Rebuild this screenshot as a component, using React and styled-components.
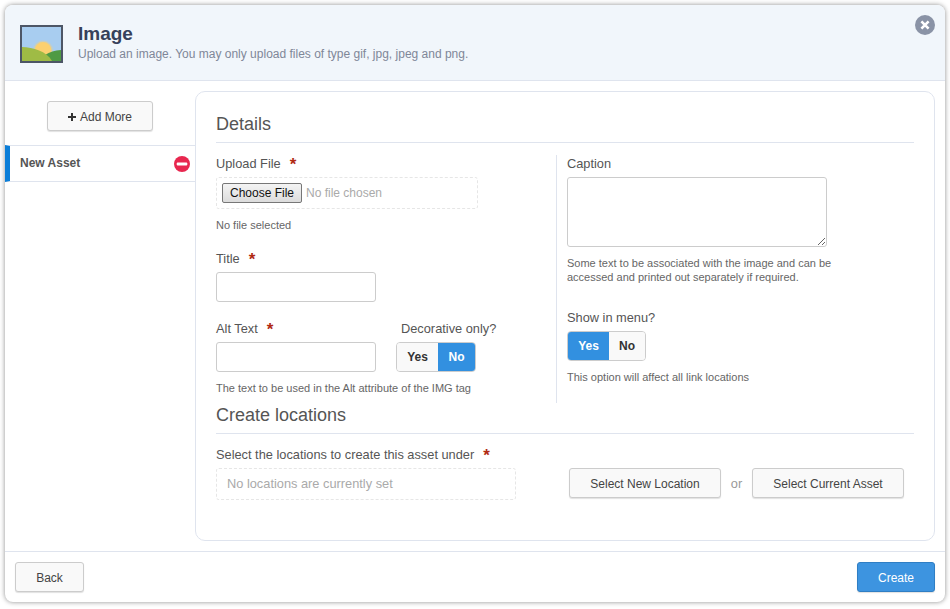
import React from "react";
import styled, { createGlobalStyle } from "styled-components";

const Global = createGlobalStyle`
  html, body { margin: 0; padding: 0; background: #fff; }
  body { font-family: "Liberation Sans", Arial, sans-serif; color: #555; }
  * { box-sizing: border-box; }
`;
const Page = styled.div`
  width: 950px; height: 609px; padding: 5px 5px 7px 5px; overflow: hidden;
`;
const Win = styled.div`
  width: 940px; height: 597px; background: #fff; border-radius: 8px;
  box-shadow: 0 0 5px rgba(0,0,0,.45); display: flex; flex-direction: column; overflow: hidden;
`;
const Header = styled.header`
  height: 76px; flex: none; background: #f1f6fb; border-bottom: 1px solid #dfe4ee;
  display: flex; align-items: flex-start; padding: 20px 0 0 15px; position: relative;
`;
const TitleWrap = styled.div`margin-left: 15px;`;
const Title = styled.h1`
  margin: -2px 0 0; font-size: 19px; line-height: 22px; font-weight: 700; color: #36415a;
`;
const Sub = styled.p`
  margin: 1px 0 0; font-size: 12px; line-height: 16px; color: #7f8798;
`;
const Close = styled.button`
  position: absolute; top: 10px; right: 10px; width: 20px; height: 20px; padding: 0;
  border: 0; border-radius: 50%; background: #8a93a6; display: flex; align-items: center; justify-content: center;
`;
const Body = styled.div`flex: 1; display: flex; min-height: 0;`;
const Side = styled.aside`width: 190px; flex: none; padding-top: 20px;`;
const SideTop = styled.div`display: flex; justify-content: center; margin-bottom: 14px;`;
const Btn = styled.button`
  height: 30px; width: ${p => p.$w}px; padding: 1px 0 0; border: 1px solid #ccc; border-radius: 3px;
  background: #f9f9f9; box-shadow: 0 1px 1px rgba(0,0,0,.12);
  font: 12px "Liberation Sans", Arial, sans-serif; color: #444; display: inline-flex;
  align-items: center; justify-content: center; gap: 4px;
`;
const AssetRow = styled.div`
  height: 37px; border-top: 1px solid #dfe4ee; border-bottom: 1px solid #dfe4ee;
  border-left: 5px solid #0b7ed8; display: flex; align-items: center;
  justify-content: space-between; padding: 0 5px 2px 10px;
  font-size: 12px; font-weight: 700; color: #555;
`;
const AssetIcon = styled.svg`margin-top: 2px; flex: none;`;
const Panel = styled.main`
  width: 740px; height: 450px; margin-top: 10px; flex: none; border: 1px solid #dfe4ee; border-radius: 10px;
  padding: 20px 20px 0 20px;
`;
const Section = styled.h2`
  margin: 0; font-size: 18px; line-height: 24px; font-weight: 400; color: #555;
  padding-bottom: 7px; border-bottom: 1px solid #dfe4ee; height: 31px;
`;
const Cols = styled.div`display: flex; margin-top: 12px; height: 248px;`;
const Left = styled.div`width: 341px; flex: none; border-right: 1px solid #dfe4ee;`;
const Right = styled.div`flex: 1; padding-left: 10px;`;
const Label = styled.div`
  font-size: 12.8px; line-height: 16px; height: 16px; padding-top: 1px; color: #555; margin-top: ${p => p.$mt || 0}px;
`;
const Star = styled.span`
  display: inline-block; color: #b02a12; font-size: 17px; font-weight: 700; margin-left: 9px; line-height: 14px; vertical-align: -2px;
`;
const FileBox = styled.div`
  width: 262px; height: 32px; margin-top: 6px; border: 1px dashed #e6e6e6; border-radius: 3px;
  display: flex; align-items: center; padding-left: 5px;
`;
const File = styled.input`
  font: 12px "Liberation Sans", Arial, sans-serif; color: #aaa; width: 250px;
  &::file-selector-button { font: 12px "Liberation Sans", Arial, sans-serif; color: #111; height: 20px; width: 80px; margin-right: 4px; padding: 0; border: 1px solid #777; border-radius: 2px; background: linear-gradient(#f4f4f4,#dcdcdc); }
`;
const Help = styled.div`
  font-size: 11px; line-height: 14px; color: #666; margin-top: ${p => p.$mt || 0}px; width: ${p => p.$w ? p.$w + "px" : "auto"};
`;
const Input = styled.input`
  display: block; width: 160px; height: 30px; margin-top: 6px; border: 1px solid #ccc; border-radius: 3px;
  background: #fff; padding: 0 8px;
`;
const Row = styled.div`display: flex; margin-top: ${p => p.$mt || 0}px;`;
const DecoCol = styled.div`margin-left: 20px;`;
const DecoLabel = styled(Label)`margin-left: 5px;`;
const Toggle = styled.div`
  display: inline-flex; height: 30px; margin-top: 6px; border: 1px solid #ccc; border-radius: 4px; overflow: hidden; background: #f9f9f9;
`;
const ToggleOn = styled.div`
  width: ${p => p.$w}px; display: flex; align-items: center; justify-content: center;
  font-size: 12px; font-weight: 700; background: ${p => p.$on ? "#3290e0" : "#f9f9f9"};
  color: ${p => p.$on ? "#fff" : "#333"};
`;
const Textarea = styled.textarea`
  display: block; width: 260px; height: 70px; margin-top: 6px; border: 1px solid #ccc; border-radius: 3px; background: #fff; padding: 4px;
`;
const LocRow = styled.div`display: flex; margin-top: 12px;`;
const LocLeft = styled.div`width: 353px; flex: none;`;
const LocBox = styled.div`
  width: 300px; height: 32px; margin-top: 6px; border: 1px dashed #e6e6e6; border-radius: 3px;
  display: flex; align-items: center; padding: 0 0 2px 10px; font-size: 12.8px; color: #aaa;
`;
const LocActions = styled.div`display: flex; align-items: center; margin-top: 22px; height: 30px;`;
const Or = styled.span`width: 31px; text-align: center; font-size: 12.8px; color: #999;`;
const Footer = styled.footer`
  height: 51px; flex: none; border-top: 1px solid #dfe4ee; padding: 10px 10px 0; display: flex; justify-content: space-between; align-items: flex-start;
`;
const Primary = styled(Btn)`
  background: #3d94e0; border-color: #2f7ec4; color: #fff;
`;

const Landscape = () => (
  <svg width="43" height="38" viewBox="0 0 43 38" style={{ flex: "none" }}>
    <defs>
      <clipPath id="c"><rect x="2" y="2" width="39" height="34" /></clipPath>
    </defs>
    <rect width="43" height="38" fill="#4d5666" />
    <g clipPath="url(#c)">
      <rect x="2" y="2" width="39" height="34" fill="#a8cdf0" />
      <circle cx="23" cy="25.5" r="10" fill="#fcd06f" opacity=".35" />
      <circle cx="23" cy="25.5" r="8.5" fill="#fcd06f" />
      <path d="M25 30 C 30 26.5 36 25 43 25 L43 38 L25 38 Z" fill="#4f9a44" />
      <path d="M0 22 C 12 22 28 26 33 38 L0 38 Z" fill="#9fbb45" />
    </g>
  </svg>
);

export default function App() {
  return (
    <Page>
      <Global />
      <Win>
        <Header>
          <Landscape />
          <TitleWrap>
            <Title>Image</Title>
            <Sub>Upload an image. You may only upload files of type gif, jpg, jpeg and png.</Sub>
          </TitleWrap>
          <Close aria-label="Close">
            <svg width="10" height="10" viewBox="0 0 10 10"><path d="M1.4 1.4 L8.6 8.6 M8.6 1.4 L1.4 8.6" stroke="#fff" strokeWidth="2.6" /></svg>
          </Close>
        </Header>
        <Body>
          <Side>
            <SideTop>
              <Btn $w={106}>
                <svg width="8" height="8" viewBox="0 0 8 8"><path d="M4 0V8M0 4H8" stroke="#333" strokeWidth="2" /></svg>
                Add More
              </Btn>
            </SideTop>
            <AssetRow>
              New Asset
              <AssetIcon width="16" height="16" viewBox="0 0 16 16"><circle cx="8" cy="8" r="8" fill="#e8274f" /><rect x="2.7" y="6.5" width="10.6" height="3" rx="1" fill="#fff" /></AssetIcon>
            </AssetRow>
          </Side>
          <Panel>
            <Section>Details</Section>
            <Cols>
              <Left>
                <Label>Upload File<Star>*</Star></Label>
                <FileBox><File type="file" /></FileBox>
                <Help $mt={9}>No file selected</Help>
                <Label $mt={18}>Title<Star>*</Star></Label>
                <Input />
                <Row $mt={18}>
                  <div>
                    <Label>Alt Text<Star>*</Star></Label>
                    <Input />
                  </div>
                  <DecoCol>
                    <DecoLabel>Decorative only?</DecoLabel>
                    <Toggle><ToggleOn $w={41}>Yes</ToggleOn><ToggleOn $w={37} $on>No</ToggleOn></Toggle>
                  </DecoCol>
                </Row>
                <Help $mt={9}>The text to be used in the Alt attribute of the IMG tag</Help>
              </Left>
              <Right>
                <Label>Caption</Label>
                <Textarea />
                <Help $mt={9} $w={280}>Some text to be associated with the image and can be accessed and printed out separately if required.</Help>
                <Label $mt={25}>Show in menu?</Label>
                <Toggle><ToggleOn $w={41} $on>Yes</ToggleOn><ToggleOn $w={36}>No</ToggleOn></Toggle>
                <Help $mt={9}>This option will affect all link locations</Help>
              </Right>
            </Cols>
            <Section>Create locations</Section>
            <LocRow>
              <LocLeft>
                <Label>Select the locations to create this asset under<Star>*</Star></Label>
                <LocBox>No locations are currently set</LocBox>
              </LocLeft>
              <LocActions>
                <Btn $w={152}>Select New Location</Btn>
                <Or>or</Or>
                <Btn $w={152}>Select Current Asset</Btn>
              </LocActions>
            </LocRow>
          </Panel>
        </Body>
        <Footer>
          <Btn $w={69}>Back</Btn>
          <Primary $w={78}>Create</Primary>
        </Footer>
      </Win>
    </Page>
  );
}
